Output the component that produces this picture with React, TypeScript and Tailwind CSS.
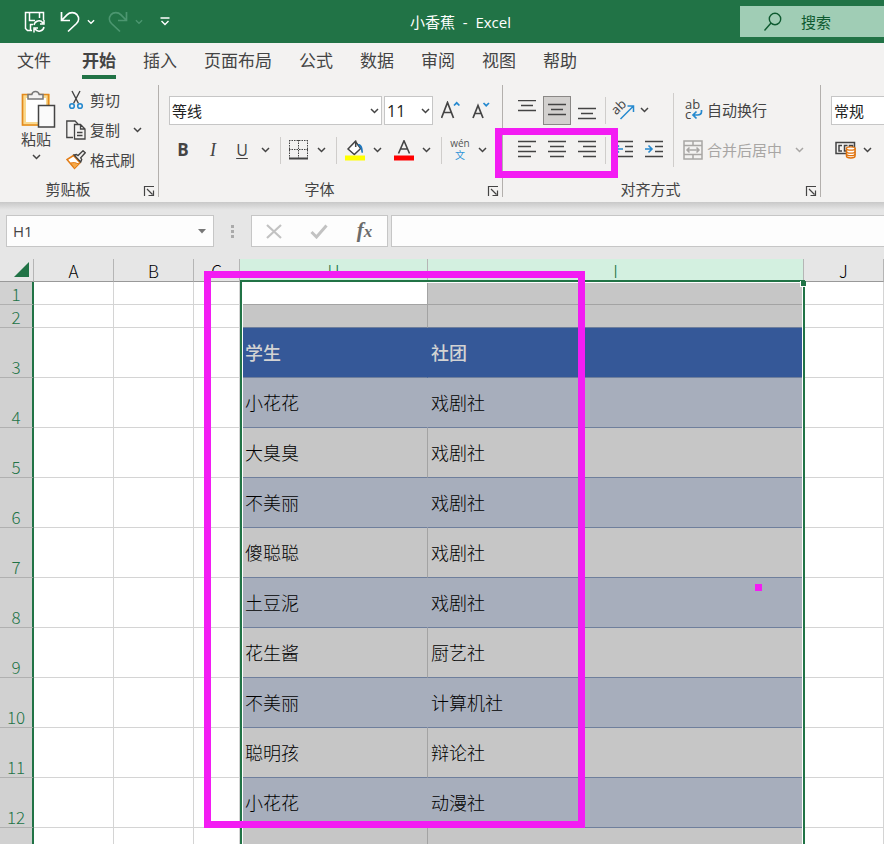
import type { ReactNode } from "react";

const uiFont = "font-['Open_Sans','Noto_Sans_CJK_SC',sans-serif]";

function Chevron({ className = "" }: { className?: string }) {
  return (
    <svg width="9" height="6" viewBox="0 0 9 6" fill="none" className={className} aria-hidden="true">
      <path d="M1 1l3.500 3.500L8 1" stroke="currentColor" strokeWidth="1.500" />
    </svg>
  );
}

function Btn({ label, className, children }: { label: string; className: string; children: ReactNode }) {
  return (
    <button type="button" aria-label={label} className={`flex shrink-0 items-center justify-center ${className}`}>
      {children}
    </button>
  );
}

function Drop({ label, className = "w-[18px]" }: { label: string; className?: string }) {
  return (
    <Btn label={label} className={`h-7 ${className}`}>
      <Chevron />
    </Btn>
  );
}

function Sep() {
  return <span className="mr-[5px] ml-[6px] h-[27px] w-px shrink-0 bg-[#cfcdcb]" />;
}

function Group({ label, className, children }: { label: string; className: string; children: ReactNode }) {
  return (
    <section aria-label={label} className={`relative flex shrink-0 flex-col border-r border-[#b3b0ad] ${className}`}>
      {children}
      <div className="mt-auto flex h-4 items-center">
        <span className="flex-1 text-center text-[15px] leading-4">{label}</span>
        <Btn label={`${label}设置`} className="h-4 w-[22px] pl-1">
          <svg width="12" height="12" viewBox="0 0 12 12" fill="none" stroke="#444" strokeWidth="1.200" className="mt-1">
            <path d="M1.500 11V1.500H11M4 4l5.500 5.500M10.500 5.500v5h-5" />
          </svg>
        </Btn>
      </div>
    </section>
  );
}

function Lines({ rows }: { rows: [number, number, number][] }) {
  return (
    <svg width="20" height="20" viewBox="0 0 20 20" stroke="#444" strokeWidth="1.500" aria-hidden="true">
      {rows.map(([y, a, b]) => (
        <path key={y} d={`M${a} ${y}.5H${b}`} />
      ))}
    </svg>
  );
}

function TitleBar() {
  return (
    <header className="flex h-[43px] shrink-0 items-center bg-[#217346] text-white">
      <Btn label="保存" className="ml-5 h-8 w-[30px]">
        <svg width="22" height="22" viewBox="0 0 22 22" fill="none" stroke="#fff" strokeWidth="1.500">
          <path d="M8 19.500H3.500L1.500 17.500V1.500H19.500V9" />
          <path d="M5.500 2v7.500H11M15.500 2v5M6.500 19v-5.500H9" />
          <path d="M10 14a5 5 0 0 1 9-2M20 9v4h-4M20 16a5 5 0 0 1-9 2M10 21.500v-4.500h4" />
        </svg>
      </Btn>
      <Btn label="撤消" className="ml-[3px] h-8 w-[34px]">
        <svg width="20" height="22" viewBox="0 0 20 22" fill="none" stroke="#fff" strokeWidth="1.700">
          <path d="M1.500 1v8.500H10M2 9l5-5.200C10 .8 14.500 1 17 3.700c2.300 2.700 2 6.300-.5 8.800L8 20.500" />
        </svg>
      </Btn>
      <Drop label="撤消列表" className="w-2" />
      <Btn label="恢复" className="ml-[6px] h-8 w-[34px] text-[#4c9670]">
        <svg width="20" height="22" viewBox="0 0 20 22" fill="none" stroke="currentColor" strokeWidth="1.700">
          <path d="M18.500 1v8.500H10M18 9l-5-5.200C10 .8 5.500 1 3 3.700c-2.300 2.700-2 6.300.5 8.800L12 20.500" />
        </svg>
      </Btn>
      <Drop label="恢复列表" className="w-2 text-[#4c9670]" />
      <Btn label="自定义快速访问工具栏" className="ml-3 h-8 w-5">
        <svg width="10" height="9" viewBox="0 0 10 9" fill="none" stroke="#fff" strokeWidth="1.400">
          <path d="M.5 1h9M1.500 4L5 7.500 8.500 4" />
        </svg>
      </Btn>
      <h1 className="flex-1 pl-[6px] text-center text-[15px] leading-5 whitespace-pre">小香蕉  -  Excel</h1>
      <label className="flex h-[31px] w-36 items-center bg-[#a0cdb5] pl-[23px] text-[#0e5a30]">
        <svg width="20" height="20" viewBox="0 0 20 20" fill="none" stroke="currentColor" strokeWidth="1.400" aria-hidden="true">
          <circle cx="12" cy="7" r="5.700" />
          <path d="M8 11l-6.500 7.500" />
        </svg>
        <input
          type="search"
          aria-label="搜索"
          placeholder="搜索"
          className="ml-[18px] w-16 bg-transparent text-[15px] leading-5 outline-none placeholder:text-[#0e5a30]"
        />
      </label>
    </header>
  );
}

const tabs = ["文件", "开始", "插入", "页面布局", "公式", "数据", "审阅", "视图", "帮助"];

function Tabs() {
  return (
    <nav className="flex h-[42px] gap-[27px] pl-[17px] text-[17px] leading-6">
      {tabs.map((t) => (
        <a
          key={t}
          href="#"
          aria-current={t === "开始" ? "page" : undefined}
          className={`mt-[6px] h-[30px] shrink-0 ${t === "文件" ? "mr-1" : ""} ${
            t === "开始" ? "border-b-4 border-[#217346] font-bold" : ""
          }`}
        >
          {t}
        </a>
      ))}
    </nav>
  );
}

function Clipboard() {
  return (
    <Group label="剪贴板" className="w-[159px]">
      <div className="flex">
        <button type="button" className="ml-[15px] flex w-[42px] flex-col items-center pt-1">
          <svg width="36" height="40" viewBox="0 0 36 40" fill="none" className="ml-[6px]" aria-hidden="true">
            <path d="M3 7h24v28H3z" fill="#fff" stroke="#f9d98f" strokeWidth="4" />
            <path d="M1.500 5.500h26V36h-26z" stroke="#e38a1c" strokeWidth="1.700" />
            <path d="M7 10V5.500h3.800a3.800 3.800 0 0 1 7.400 0H22V10z" fill="#f3f2f1" stroke="#777" strokeWidth="1.500" />
            <path d="M17.500 16.500h16V38h-16z" fill="#fafafa" stroke="#444" strokeWidth="1.500" />
          </svg>
          <span className="text-[15px] leading-[21px]">粘贴</span>
          <Chevron className="mt-1" />
        </button>
        <div className="ml-[9px] flex flex-col text-[15px]">
          <button type="button" className="flex h-[30px] items-center gap-1">
            <svg width="20" height="20" viewBox="0 0 20 20" fill="none" aria-hidden="true">
              <path d="M6 1l6.500 12.500M14 1L7.500 13.500" stroke="#444" strokeWidth="1.400" />
              <circle cx="6" cy="16" r="2.300" stroke="#2589cf" strokeWidth="1.600" />
              <circle cx="14" cy="16" r="2.300" stroke="#2589cf" strokeWidth="1.600" />
            </svg>
            剪切
          </button>
          <div className="flex h-[30px] items-center">
            <button type="button" className="flex items-center gap-1">
              <svg width="20" height="20" viewBox="0 0 20 20" fill="none" stroke="#444" strokeWidth="1.300" aria-hidden="true">
                <path d="M7 17.500H.8V1H9l3 3" />
                <path d="M8.500 4.500h6l4.500 4.500v10H8.500zM14.500 4.500V9H19M11 12.500h5.500M11 15.500h5.500" />
              </svg>
              复制
            </button>
            <Drop label="复制选项" className="ml-2 w-[18px]" />
          </div>
          <button type="button" className="flex h-[30px] items-center gap-1">
            <svg width="20" height="20" viewBox="0 0 20 20" fill="none" aria-hidden="true">
              <path d="M7.500 5.500L1 9.500l7.500 8.800 5.500-5.500z" fill="#fff" stroke="#e37d16" strokeWidth="1.500" />
              <path d="M4.500 13l4-.5 4.500 1.500-4.500 4.500z" fill="#f6a948" stroke="#e37d16" />
              <path d="M8 5l2.500-.5 1.500 1L17 .8l2.200 2-4.500 5 1 1.700-1 2.500z" fill="#f3f2f1" stroke="#444" strokeWidth="1.400" />
            </svg>
            格式刷
          </button>
        </div>
      </div>
    </Group>
  );
}

function SelectBox({ label, value, className }: { label: string; value: string; className: string }) {
  return (
    <div className={`relative h-[29px] ${className}`}>
      <select
        aria-label={label}
        className="h-full w-full appearance-none border border-[#c6c6c6] bg-white pl-[2px] leading-5 text-[#222]"
      >
        <option>{value}</option>
      </select>
      <Chevron className="pointer-events-none absolute top-3 right-[3px]" />
    </div>
  );
}

function FontGroup() {
  return (
    <Group label="字体" className="w-[344px]">
      <div className="flex h-[42px] items-center pt-[9px] pl-[10px]">
        <SelectBox label="字体" value="等线" className="mr-[2px] w-[213px] text-[15px]" />
        <SelectBox label="字号" value="11" className="w-[49px] text-[16px]" />
        <Btn label="增大字号" className="ml-[3px] h-7 w-[30px]">
          <svg width="20" height="20" viewBox="0 0 20 20" fill="none" aria-hidden="true">
            <path d="M.5 17L6.500 1.500 12.500 17M2.700 11.500h7.600" stroke="#444" strokeWidth="1.700" />
            <path d="M13 4.500l2.700-2.700 2.700 2.700" stroke="#2589cf" strokeWidth="1.700" />
          </svg>
        </Btn>
        <Btn label="减小字号" className="h-7 w-[30px]">
          <svg width="20" height="20" viewBox="0 0 20 20" fill="none" aria-hidden="true">
            <path d="M2 17L7 4.500 12 17M3.800 12.500h6.400" stroke="#444" strokeWidth="1.700" />
            <path d="M12.500 2l2.700 2.700L18 2" stroke="#2589cf" strokeWidth="1.700" />
          </svg>
        </Btn>
      </div>
      <div className="flex h-10 items-center pt-[6px] pl-[9px]">
        <Btn label="加粗" className="h-7 w-[30px] text-[17px] font-bold">B</Btn>
        <Btn label="倾斜" className="h-7 w-[30px] font-['Liberation_Serif'] text-[18px] italic">I</Btn>
        <Btn label="下划线" className="h-7 w-7 text-[16px] underline underline-offset-2">U</Btn>
        <Drop label="下划线选项" />
        <Sep />
        <Btn label="边框" className="h-7 w-[26px]">
          <svg width="20" height="20" viewBox="0 0 20 20" fill="none" stroke="#444" aria-hidden="true">
            <path d="M0 .5h19M0 9.500h19M.5 0v18M9.500 0v18M18.500 0v18" strokeDasharray="1.500 1" />
            <path d="M0 18.500h19" strokeWidth="2" />
          </svg>
        </Btn>
        <Drop label="边框选项" />
        <Sep />
        <Btn label="填充颜色" className="h-7 w-[26px]">
          <svg width="20" height="21" viewBox="0 0 20 21" fill="none" aria-hidden="true">
            <path d="M3 9l7.300-7.500 5.400 7-6.400 6z" fill="#fff" stroke="#444" strokeWidth="1.500" />
            <path d="M10.700.5V7" stroke="#444" strokeWidth="1.500" />
            <path d="M12.500 4c3.500-.5 5.300 2 5.500 8.800h-1.500L15.700 8.500z" fill="#1f77bd" />
            <path d="M0 15.500h20v5H0z" fill="#ff0" />
          </svg>
        </Btn>
        <Drop label="填充颜色选项" />
        <Btn label="字体颜色" className="ml-[5px] h-7 w-[26px]">
          <svg width="20" height="21" viewBox="0 0 20 21" fill="none" aria-hidden="true">
            <path d="M4.500 13.500L10 .8l5.500 12.700M6.500 9h7" stroke="#444" strokeWidth="1.600" />
            <path d="M0 15.500h20v5H0z" fill="#f00" />
          </svg>
        </Btn>
        <Drop label="字体颜色选项" />
        <Sep />
        <Btn label="拼音指南" className="h-7 w-[26px]">
          <svg width="24" height="26" viewBox="0 0 24 26" className="overflow-visible" aria-hidden="true">
            <text x="12" textAnchor="middle" fontSize="10" fill="#555">
              <tspan>
                <tspan x="12" y="10">wén</tspan>
                <tspan x="12" y="22" fill="#2f95d8">文</tspan>
              </tspan>
            </text>
          </svg>
        </Btn>
        <Drop label="拼音选项" />
      </div>
    </Group>
  );
}

function AlignGroup() {
  return (
    <Group label="对齐方式" className="w-[318px]">
      <div className="mt-2 flex h-[74px]">
        <div className="w-[171px] shrink-0 border-r border-[#cfcdcb] pl-[9px]">
          <div className="flex h-[34px] items-center">
            <Btn label="顶端对齐" className="h-[29px] w-[30px]">
              <Lines rows={[[0, 1, 19], [5, 4, 16], [10, 1, 19]]} />
            </Btn>
            <Btn label="垂直居中" className="mx-px h-[29px] w-7 border border-[#8a8886] bg-[#d2d0ce]">
              <Lines rows={[[4, 1, 19], [9, 4, 16], [14, 1, 19]]} />
            </Btn>
            <Btn label="底端对齐" className="h-[29px] w-[30px]">
              <Lines rows={[[8, 1, 19], [13, 4, 16], [18, 1, 19]]} />
            </Btn>
            <span className="mx-[3px] h-[27px] w-px bg-[#cfcdcb]" />
            <Btn label="方向" className="h-[29px] w-[30px]">
              <svg width="22" height="22" viewBox="0 0 22 22" fill="none" className="overflow-visible" aria-hidden="true">
                <text x="1" y="15" fontSize="13" fill="#444" transform="rotate(-45 4 13)">ab</text>
                <path d="M7.500 20L20 7.500M14.500 7H20.500V13" stroke="#2589cf" strokeWidth="1.500" />
              </svg>
            </Btn>
            <Drop label="方向选项" className="w-[10px]" />
          </div>
          <div className="mt-[6px] flex h-[34px] items-center">
            <Btn label="左对齐" className="h-[29px] w-[30px]">
              <Lines rows={[[1, 1, 19], [6, 1, 14], [11, 1, 19], [16, 1, 14]]} />
            </Btn>
            <Btn label="居中" className="h-[29px] w-[30px]">
              <Lines rows={[[1, 1, 19], [6, 3, 17], [11, 1, 19], [16, 3, 17]]} />
            </Btn>
            <Btn label="右对齐" className="h-[29px] w-[30px]">
              <Lines rows={[[1, 1, 19], [6, 6, 19], [11, 1, 19], [16, 6, 19]]} />
            </Btn>
            <span className="mx-[3px] h-[27px] w-px bg-[#cfcdcb]" />
            <Btn label="减少缩进量" className="h-[29px] w-[30px]">
              <svg width="20" height="20" viewBox="0 0 20 20" fill="none" aria-hidden="true">
                <path d="M1 1.500h18M11 6.500h8M11 11.500h8M1 16.500h18" stroke="#444" strokeWidth="1.500" />
                <path d="M9 9H2M5 5.500L1.500 9 5 12.500" stroke="#2589cf" strokeWidth="1.600" />
              </svg>
            </Btn>
            <Btn label="增加缩进量" className="h-[29px] w-[30px]">
              <svg width="20" height="20" viewBox="0 0 20 20" fill="none" aria-hidden="true">
                <path d="M1 1.500h18M11 6.500h8M11 11.500h8M1 16.500h18" stroke="#444" strokeWidth="1.500" />
                <path d="M1 9h7M4.500 5.500L8 9l-3.500 3.500" stroke="#2589cf" strokeWidth="1.600" />
              </svg>
            </Btn>
          </div>
        </div>
        <div className="flex-1 pl-[9px] text-[15px]">
          <button type="button" className="flex h-[34px] items-center gap-1">
            <svg width="20" height="22" viewBox="0 0 20 22" fill="none" className="overflow-visible" aria-hidden="true">
              <text fontSize="13" fill="#444">
                <tspan x="2" y="10">ab</tspan>
                <tspan x="2" y="20">c</tspan>
              </text>
              <path d="M18.500 11v1.500q0 3.500-4 3.500H10.500M13.500 12.500L10 16l3.500 3.500" stroke="#2589cf" strokeWidth="1.700" />
            </svg>
            自动换行
          </button>
          <div className="mt-[6px] flex h-[34px] items-center text-[#a8a6a4]">
            <button type="button" className="flex items-center gap-1">
              <svg width="20" height="20" viewBox="0 0 20 20" fill="none" stroke="currentColor" strokeWidth="1.500" aria-hidden="true">
                <path d="M1 1h18v18H1zM1 5.500h18M1 14.500h18M10 1v4.500M10 14.500V19" />
                <path d="M4 10h12M6.500 7.500L4 10l2.500 2.500M13.500 7.500L16 10l-2.500 2.500" />
              </svg>
              合并后居中
            </button>
            <Drop label="合并选项" className="ml-2 w-[18px]" />
          </div>
        </div>
      </div>
      <div className="pointer-events-none absolute top-[43px] -left-2 z-10 h-[50px] w-[123px] border-7 border-[#f31cf3]" />
    </Group>
  );
}

function NumberGroup() {
  return (
    <section aria-label="数字" className="min-w-0 flex-1 overflow-hidden pl-[10px]">
      <div className="flex h-[42px] items-center pt-[9px]">
        <SelectBox label="数字格式" value="常规" className="w-[160px] shrink-0 text-[15px]" />
      </div>
      <div className="flex h-10 items-center pt-[6px] pl-[3px]">
        <Btn label="会计数字格式" className="h-7 w-[24px]">
          <svg width="22" height="18" viewBox="0 0 22 18" fill="none" aria-hidden="true">
            <path d="M1 1.500h18.500v11H1z" stroke="#444" strokeWidth="1.500" />
            <path d="M7 4.500H4v5.500h3M12.500 4.500h-3v5.500h2M14.500 6V4.500h3V6" stroke="#444" strokeWidth="1.500" />
            <path d="M11.500 7.500v7.500c0 2.500 8.500 2.500 8.500 0V7.500z" fill="#fff" stroke="#e0720c" strokeWidth="1.500" />
            <path d="M11.500 10.500c0 2.200 8.500 2.200 8.500 0M11.500 13c0 2.200 8.500 2.200 8.500 0" stroke="#e0720c" strokeWidth="1.300" />
            <ellipse cx="15.750" cy="7.500" rx="4.250" ry="1.700" fill="#fff" stroke="#e0720c" strokeWidth="1.300" />
          </svg>
        </Btn>
        <Drop label="会计格式选项" />
      </div>
    </section>
  );
}

function FormulaBar() {
  return (
    <div className="flex shrink-0 bg-[linear-gradient(#c8c8c8,#e6e6e6_8px)] pt-[13px] pb-3">
      <div className="ml-[6px] flex h-8 w-[208px] items-center border border-[#c6c6c6] bg-[#fdfdfd]">
        <input
          aria-label="名称框"
          defaultValue="H1"
          className="min-w-0 flex-1 bg-transparent pl-[6px] text-[15px] leading-5 outline-none"
        />
        <Btn label="名称列表" className="h-7 w-[22px]">
          <svg width="8" height="5" viewBox="0 0 8 5" aria-hidden="true">
            <path d="M0 0h8L4 4.500z" fill="#777" />
          </svg>
        </Btn>
      </div>
      <div className="flex w-[37px] flex-col items-center justify-center gap-[2px]">
        <span className="size-[3px] bg-[#aaa]" />
        <span className="size-[3px] bg-[#aaa]" />
        <span className="size-[3px] bg-[#aaa]" />
      </div>
      <div className="mr-[3px] flex h-8 w-[137px] items-center border border-[#c6c6c6] bg-[#fdfdfd]">
        <Btn label="取消" className="h-7 w-[43px]">
          <svg width="16" height="15" viewBox="0 0 16 15" stroke="#c2c2c2" strokeWidth="2.200" aria-hidden="true">
            <path d="M1 1l14 13M15 1L1 14" />
          </svg>
        </Btn>
        <Btn label="输入" className="h-7 w-[47px]">
          <svg width="18" height="15" viewBox="0 0 18 15" fill="none" stroke="#c2c2c2" strokeWidth="3" aria-hidden="true">
            <path d="M1.500 8l5 5L16.500 1.500" />
          </svg>
        </Btn>
        <Btn label="插入函数" className="h-7 w-[45px] font-['Liberation_Serif'] text-[21px] font-bold text-[#6b6b6b] italic">
          <span className="leading-6">
            f<span className="text-[17px]">x</span>
          </span>
        </Btn>
      </div>
      <input
        aria-label="编辑栏"
        className="h-8 min-w-0 flex-1 border border-r-0 border-[#c6c6c6] bg-[#fdfdfd] px-2 outline-none"
      />
    </div>
  );
}

type Row = { n: string; h?: string; i?: string; kind: "first" | "plain" | "head" | "band" };

const rows: Row[] = [
  { n: "1", kind: "first" },
  { n: "2", kind: "plain" },
  { n: "3", h: "学生", i: "社团", kind: "head" },
  { n: "4", h: "小花花", i: "戏剧社", kind: "band" },
  { n: "5", h: "大臭臭", i: "戏剧社", kind: "plain" },
  { n: "6", h: "不美丽", i: "戏剧社", kind: "band" },
  { n: "7", h: "傻聪聪", i: "戏剧社", kind: "plain" },
  { n: "8", h: "土豆泥", i: "戏剧社", kind: "band" },
  { n: "9", h: "花生酱", i: "厨艺社", kind: "plain" },
  { n: "10", h: "不美丽", i: "计算机社", kind: "band" },
  { n: "11", h: "聪明孩", i: "辩论社", kind: "plain" },
  { n: "12", h: "小花花", i: "动漫社", kind: "band" },
  { n: "", kind: "plain" },
];

const fills = {
  first: "bg-[#c6c6c6] border-b-[#a3a3a3] border-r-[#a3a3a3]",
  plain: "bg-[#c6c6c6] border-b-[#6f7f9c] border-r-[#a3a3a3]",
  head: "bg-[#355898] border-b-[#6f7f9c] border-r-[#355898] text-[#d3d3d3] font-medium",
  band: "bg-[#a7aebc] border-b-[#6f7f9c] border-r-[#a7aebc]",
};

const colHead = "border-r border-b border-r-[#b5b5b5] border-b-[#999] p-0 align-bottom font-light";
const blank = "border-r border-b border-[#d4d4d4] p-0";

function Sheet() {
  return (
    <main className="relative flex-1 overflow-hidden bg-white">
      <table className="w-full table-fixed border-separate border-spacing-0 font-['Noto_Sans_CJK_SC',sans-serif] text-[17px] leading-5 font-light text-black">
        <colgroup>
          <col className="w-[34px]" />
          <col className="w-[80px]" />
          <col className="w-[80px]" />
          <col className="w-[46px]" />
          <col className="w-[188px]" />
          <col className="w-[376px]" />
          <col />
        </colgroup>
        <thead>
          <tr className="h-[23px] bg-[#e6e6e6]">
            <th className={colHead}>
              <button type="button" aria-label="全选" className="mr-1 mb-1 ml-auto block">
                <svg width="15" height="15" viewBox="0 0 15 15" aria-hidden="true">
                  <path d="M15 0v15H0z" fill="#217346" />
                </svg>
              </button>
            </th>
            <th className={colHead}>A</th>
            <th className={colHead}>B</th>
            <th className={colHead}>C</th>
            <th className={`${colHead} bg-[#d3f0e0] text-[#217346]`}>H</th>
            <th className={`${colHead} bg-[#d3f0e0] text-[#217346]`}>I</th>
            <th className={colHead}>J</th>
          </tr>
        </thead>
        <tbody>
          {rows.map((r) => (
            <tr key={r.n} className={r.n === "1" || r.n === "2" ? "h-[23px]" : "h-[50px]"}>
              <th className="border-r-2 border-b border-r-[#217346] border-b-[#b0b0b0] bg-[#d1d1d1] p-0 align-bottom font-light text-[#217346]">
                <span className="block h-5">{r.n}</span>
              </th>
              <td className={blank} />
              <td className={blank} />
              <td className={blank} />
              <td className={`border-r border-b pt-0 pr-0 pb-[2px] pl-[5px] text-[18px] ${fills[r.kind]} ${r.kind === "first" ? "bg-white" : ""}`}>
                {r.h}
              </td>
              <td className={`border-r border-b pt-0 pr-0 pb-[2px] pl-[3px] text-[18px] ${fills[r.kind]}`}>{r.i}</td>
              <td className={blank} />
            </tr>
          ))}
        </tbody>
      </table>
      <div className="pointer-events-none absolute top-[21px] -bottom-2 left-[240px] w-[565px] border-2 border-[#217346]">
        <div className="h-full border border-white" />
        <span className="absolute -top-px -right-[3px] h-[6px] w-[6px] border-b border-l border-white bg-[#217346]" />
      </div>
      <div className="pointer-events-none absolute top-3 left-[204px] h-[557px] w-[381px] border-7 border-[#f31cf3]" />
      <div className="pointer-events-none absolute top-[325px] left-[755px] size-[7px] bg-[#f31cf3]" />
    </main>
  );
}

export default function App() {
  return (
    <div className={`flex h-screen flex-col overflow-hidden bg-[#e6e6e6] text-[#444] ${uiFont}`}>
      <TitleBar />
      <div className="shrink-0 bg-[#f3f2f1] pb-[5px]">
        <Tabs />
        <div className="flex h-[112px]">
          <Clipboard />
          <FontGroup />
          <AlignGroup />
          <NumberGroup />
        </div>
      </div>
      <FormulaBar />
      <Sheet />
    </div>
  );
}
